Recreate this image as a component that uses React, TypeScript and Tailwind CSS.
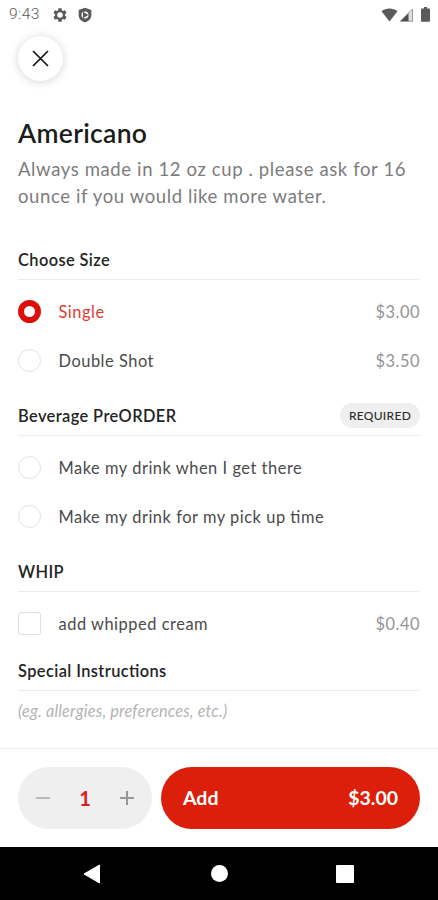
import React from "react";

const liga = "[font-feature-settings:'liga'_1]";

function StatusBar() {
  return (
    <div className="flex h-[29px] items-center justify-between pl-[9px] pr-[8px] text-[#5a5a5a]">
      <div className="flex items-center">
        <span className="w-[43px] font-[Roboto] text-[15.5px] font-light leading-[29px] tracking-[0.4px]">9:43</span>
        <svg className="h-[16px] w-[16px]" viewBox="0 0 24 24" fill="currentColor">
          <path
            fillRule="evenodd"
            d="M19.43 12.98c.04-.32.07-.64.07-.98s-.03-.66-.07-.98l2.11-1.65c.19-.15.24-.42.12-.64l-2-3.46c-.12-.22-.39-.3-.61-.22l-2.49 1c-.52-.4-1.08-.73-1.69-.98l-.38-2.65A.49.49 0 0 0 14 2h-4c-.25 0-.46.18-.49.42l-.38 2.65c-.61.25-1.17.59-1.69.98l-2.49-1c-.23-.09-.49 0-.61.22l-2 3.46c-.13.22-.07.49.12.64l2.11 1.65c-.04.32-.07.65-.07.98s.03.66.07.98l-2.11 1.65c-.19.15-.24.42-.12.64l2 3.46c.12.22.39.3.61.22l2.49-1c.52.4 1.08.73 1.69.98l.38 2.65c.03.24.24.42.49.42h4c.25 0 .46-.18.49-.42l.38-2.65c.61-.25 1.17-.59 1.69-.98l2.49 1c.23.09.49 0 .61-.22l2-3.46c.12-.22.07-.49-.12-.64zM12 16.2a4.2 4.2 0 1 1 0-8.4 4.2 4.2 0 0 1 0 8.4z"
          />
        </svg>
        <svg className="ml-[9px] h-[16px] w-[16px]" viewBox="0 0 24 24" fill="currentColor">
          <path fillRule="evenodd" d="M12 1 2.500 4.600V12c0 5.300 4 9.700 9.500 11 5.500-1.300 9.500-5.700 9.500-11V4.600zM12 6.800a5.200 5.200 0 1 1 0 10.400 5.200 5.200 0 0 1 0-10.400z" />
          <path d="M9 7v10l8-5z" />
        </svg>
      </div>
      <div className="flex items-center">
        <svg className="h-[14px] w-[17px]" viewBox="0 0 17 14" fill="currentColor">
          <path d="M.5 3.200C5 -.3 12 -.3 16.500 3.200L8.500 13.400z" />
        </svg>
        <svg className="ml-[1px] h-[14px] w-[15px]" viewBox="0 0 15 14">
          <path d="M14 .5V13.500H1z" fill="#dedede" />
          <path d="M9.500 5V13.500H1z" fill="#4e4e4e" />
          <path d="M1 13.500 13.500 1V13.200H9" fill="none" stroke="#8a8a8a" strokeWidth=".8" />
        </svg>
        <svg className="ml-[7px] h-[15px] w-[9px]" viewBox="0 0 9 15" fill="currentColor">
          <path d="M3 0h3v1.600h2.200q.8 0 .8.800v11.500q0 .8-.8.800H.8q-.8 0-.8-.8V2.400q0-.8.8-.8H3z" />
        </svg>
      </div>
    </div>
  );
}

function SectionHeading({ title, required }: { title: string; required?: boolean }) {
  return (
    <div className="flex h-[40px] items-center justify-between border-b border-[#ededed]">
      <h2 className={"text-[16.4px] font-semibold leading-[22px] tracking-[0.4px] text-[#242424] " + liga}>{title}</h2>
      {required && (
        <span className="flex h-[25px] w-[80px] items-center justify-center rounded-full bg-[#efefef] text-[12px] font-medium tracking-[0.3px] text-[#2c2c2c]">
          REQUIRED
        </span>
      )}
    </div>
  );
}

type OptionProps = { label: string; price?: string; selected?: boolean; square?: boolean };

function Option({ label, price, selected, square }: OptionProps) {
  const mark = selected
    ? "rounded-full border-[6px] border-[#dc0f0a]"
    : square
      ? "rounded-[3px] border-[1.500px] border-[#dedede]"
      : "rounded-full border-[1.500px] border-[#e2e2e2]";
  return (
    <div className="flex h-[49px] items-center text-[16.4px] leading-[22px] tracking-[0.54px]">
      <span className={"h-[23px] w-[23px] shrink-0 bg-white " + mark} />
      <span className={"ml-[17.5px] flex-1 " + liga + (selected ? " text-[#e03a35]" : " text-[#4a4a4a]")}>{label}</span>
      {price && <span className="text-[#949494]">{price}</span>}
    </div>
  );
}

export default function App() {
  return (
    <div className="flex h-[900px] w-[438px] flex-col overflow-hidden bg-white font-[Lato,sans-serif]">
      <StatusBar />
      <main className="flex-1 px-[18px]">
        <button className="mt-[7px] flex h-[45px] w-[45px] items-center justify-center rounded-full bg-white shadow-[0_1px_10px_rgba(0,0,0,0.17)]">
          <svg className="h-[17px] w-[17px]" viewBox="0 0 17 17" fill="none" stroke="#151515" strokeWidth="1.700">
            <path d="M1 1l15 15M16 1 1 16" />
          </svg>
        </button>
        <h1 className="mt-[36px] text-[26.5px] font-semibold leading-[32px] tracking-[0.3px] text-[#1c1c1c]">Americano</h1>
        <p className="mt-[7px] h-[84px] whitespace-nowrap text-[18.5px] leading-[27px] tracking-[0.62px] text-[#7c7c7c]">
          Always made in 12 oz cup . please ask for 16
          <br />
          ounce if you would like more water.
        </p>

        <section className="h-[156px]">
          <SectionHeading title="Choose Size" />
          <div className="pt-[7px]">
            <Option label="Single" price="$3.00" selected />
            <Option label="Double Shot" price="$3.50" />
          </div>
        </section>
        <section className="h-[156px]">
          <SectionHeading title="Beverage PreORDER" required />
          <div className="pt-[7px]">
            <Option label="Make my drink when I get there" />
            <Option label="Make my drink for my pick up time" />
          </div>
        </section>
        <section className="h-[99px]">
          <SectionHeading title="WHIP" />
          <div className="pt-[7px]">
            <Option label="add whipped cream" price="$0.40" square />
          </div>
        </section>
        <section>
          <SectionHeading title="Special Instructions" />
          <p className="pt-[8px] text-[16.4px] italic leading-[24px] tracking-[0.14px] text-[#b4b4b4]">(eg. allergies, preferences, etc.)</p>
        </section>
      </main>

      <footer className="flex h-[99px] shrink-0 gap-[9px] border-t border-[#ececec] px-[18px] pt-[18px]">
        <div className="flex h-[62px] w-[134px] items-center justify-between rounded-full bg-[#efefef] px-[18px]">
          <svg className="h-[14px] w-[14px]" viewBox="0 0 14 14" stroke="#b9b9b9" strokeWidth="2">
            <path d="M0 7h14" />
          </svg>
          <span className="text-[20px] font-bold text-[#d8201b]">1</span>
          <svg className="h-[14px] w-[14px]" viewBox="0 0 14 14" stroke="#979797" strokeWidth="2">
            <path d="M0 7h14M7 0v14" />
          </svg>
        </div>
        <button className="flex h-[62px] flex-1 items-center justify-between rounded-full bg-[#db1f0a] px-[22px] text-[19.5px] font-bold text-white">
          <span>Add</span>
          <span>$3.00</span>
        </button>
      </footer>

      <nav className="flex h-[53px] shrink-0 items-center bg-black">
        <svg className="ml-[83px] h-[20px] w-[18px]" viewBox="0 0 18 20" fill="#fff">
          <path d="M16.500 1v18L1 10z" stroke="#fff" strokeLinejoin="round" />
        </svg>
        <span className="ml-[110px] h-[17px] w-[17px] rounded-full bg-white" />
        <span className="ml-[108px] h-[18px] w-[18px] rounded-[1px] bg-white" />
      </nav>
    </div>
  );
}
